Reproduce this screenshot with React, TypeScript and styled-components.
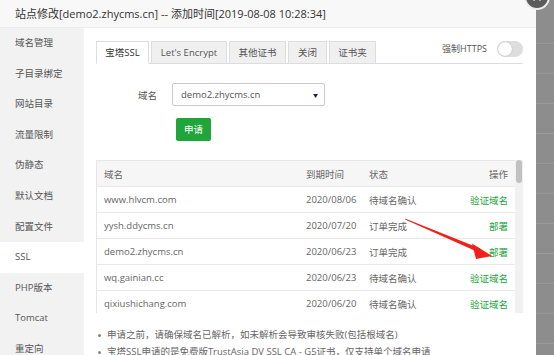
import React from 'react'
import styled, { createGlobalStyle } from 'styled-components'

const GREEN = '#20a53a'

const GlobalStyle = createGlobalStyle`
  html, body {
    margin: 0;
    padding: 0;
    background: #fff;
  }
  body {
    font-family: "Open Sans", "Noto Sans CJK SC", sans-serif;
    color: #555;
  }
`

const Page = styled.div`
  position: relative;
  display: flex;
  width: 554px;
  height: 355px;
  overflow: hidden;
`

const Dialog = styled.div`
  display: flex;
  flex-direction: column;
  width: 536px;
  background: #fff;
`

const Backdrop = styled.div`
  flex: 1;
  background: repeating-linear-gradient(
    180deg,
    #8d8d8d 0px,
    #8d8d8d 29px,
    #9a9a9a 29px,
    #9a9a9a 30px
  );
  background-position: 0 14px;
`

const CloseButton = styled.div`
  position: absolute;
  left: 524px;
  top: -16px;
  width: 22px;
  height: 22px;
  border-radius: 50%;
  background: #5c5c5c;
  border: 2px solid #eee;
  display: flex;
  align-items: center;
  justify-content: center;
`

const TitleBar = styled.div`
  height: 27px;
  line-height: 27px;
  padding-left: 15px;
  background: #f8f8f8;
  border-bottom: 1px solid #ececec;
  color: #333;
  font-size: 11px;
  white-space: nowrap;
`

const Body = styled.div`
  display: flex;
  flex: 1;
  min-height: 0;
`

const Sidebar = styled.div`
  width: 84px;
  background: #f2f2f2;
  display: flex;
  flex-direction: column;
`

const SideItem = styled.div<{ $active?: boolean }>`
  flex: 0 0 30.6px;
  line-height: 30.6px;
  padding-left: 15px;
  font-size: 9.5px;
  color: #555;
  background: ${p => (p.$active ? '#fff' : 'transparent')};
`

const Content = styled.div`
  flex: 1;
  padding: 12px 13px 0 12px;
  min-width: 0;
`

const TabBar = styled.div`
  display: flex;
  align-items: flex-end;
  height: 23px;
  border-bottom: 1px solid #dcdce6;
`

const Tab = styled.div<{ $active?: boolean; $w: number }>`
  box-sizing: border-box;
  width: ${p => p.$w}px;
  height: 23px;
  margin-right: 2px;
  margin-bottom: -1px;
  border: 1px solid #ddd;
  border-bottom-color: ${p => (p.$active ? '#fff' : '#ddd')};
  background: ${p => (p.$active ? '#fff' : '#f0f0f0')};
  color: ${p => (p.$active ? '#333' : '#555')};
  font-size: 9.5px;
  line-height: 22px;
  text-align: center;
`

const HttpsSwitch = styled.div`
  margin-left: auto;
  align-self: center;
  display: flex;
  align-items: center;
  gap: 10px;
  font-size: 9px;
  color: #555;
  margin-top: -6px;
`

const Toggle = styled.div`
  position: relative;
  width: 26px;
  height: 16px;
  border-radius: 8px;
  background: #ddd;
`

const Knob = styled.div`
  position: absolute;
  left: 1px;
  top: 1px;
  width: 14px;
  height: 14px;
  border-radius: 50%;
  background: #fff;
  box-shadow: 0 0 1px rgba(0, 0, 0, 0.35);
`

const FormRow = styled.div`
  display: flex;
  align-items: center;
  margin-top: 19px;
`

const Label = styled.div`
  width: 61px;
  padding-right: 15px;
  text-align: right;
  font-size: 9.5px;
  color: #555;
`

const Select = styled.div`
  box-sizing: border-box;
  display: flex;
  align-items: center;
  justify-content: space-between;
  width: 153px;
  height: 23px;
  padding: 0 6px 0 8px;
  border: 1px solid #ccc;
  border-radius: 2px;
  font-size: 9.5px;
  color: #555;
`

const Caret = styled.span`
  font-size: 5px;
  color: #222;
`

const ApplyButton = styled.div`
  width: 35px;
  height: 23px;
  margin: 12px 0 0 80px;
  border-radius: 2px;
  background: ${GREEN};
  color: #fff;
  font-size: 9.5px;
  line-height: 23px;
  text-align: center;
`

const TableBox = styled.div`
  display: flex;
  height: 153px;
  margin-top: 19px;
  overflow: hidden;
`

const Table = styled.div`
  flex: 1;
  border-left: 1px solid #e6e6e6;
  border-top: 1px solid #e6e6e6;
`

const TRow = styled.div<{ $head?: boolean }>`
  display: grid;
  grid-template-columns: 202px 63px 1fr auto;
  height: 26px;
  align-items: center;
  box-sizing: border-box;
  border-bottom: 1px solid #e9e9e9;
  background: ${p => (p.$head ? '#f6f6f6' : '#fff')};
  font-size: 9.5px;
  color: #666;
`

const Cell = styled.div<{ $right?: boolean }>`
  padding: 0 7px;
  white-space: nowrap;
  text-align: ${p => (p.$right ? 'right' : 'left')};
`

const Action = styled.span`
  color: ${GREEN};
`

const ScrollTrack = styled.div`
  width: 8px;
  background: #f1f1f1;
  display: flex;
  justify-content: center;
`

const ScrollThumb = styled.div`
  width: 6px;
  height: 23px;
  border-radius: 3px;
  background: #c1c1c1;
`

const Notes = styled.ul`
  margin: 13px 0 0;
  padding: 0 0 0 11px;
  font-size: 9.5px;
  color: #666;
  line-height: 17px;
  list-style: none;
`

const Note = styled.li`
  position: relative;
  white-space: nowrap;
  &::before {
    content: '';
    position: absolute;
    left: -9px;
    top: 7.5px;
    width: 3px;
    height: 3px;
    border-radius: 50%;
    background: #888;
  }
`

const ArrowLayer = styled.svg`
  position: absolute;
  left: 0;
  top: 0;
  pointer-events: none;
`

const menu = ['域名管理', '子目录绑定', '网站目录', '流量限制', '伪静态', '默认文档', '配置文件', 'SSL', 'PHP版本', 'Tomcat', '重定向']

const tabs: [string, number][] = [
  ['宝塔SSL', 53],
  ["Let's Encrypt", 76],
  ['其他证书', 57],
  ['关闭', 39],
  ['证书夹', 47],
]

const rows = [
  { domain: 'www.hlvcm.com', date: '2020/08/06', state: '待域名确认', action: '验证域名' },
  { domain: 'yysh.ddycms.cn', date: '2020/07/20', state: '订单完成', action: '部署' },
  { domain: 'demo2.zhycms.cn', date: '2020/06/23', state: '订单完成', action: '部署' },
  { domain: 'wq.gainian.cc', date: '2020/06/23', state: '待域名确认', action: '验证域名' },
  { domain: 'qixiushichang.com', date: '2020/06/20', state: '待域名确认', action: '验证域名' },
]

export default function App() {
  return (
    <Page>
      <GlobalStyle />
      <Dialog>
        <TitleBar>站点修改[demo2.zhycms.cn] -- 添加时间[2019-08-08 10:28:34]</TitleBar>
        <Body>
          <Sidebar>
            {menu.map(m => (
              <SideItem key={m} $active={m === 'SSL'}>{m}</SideItem>
            ))}
          </Sidebar>
          <Content>
            <TabBar>
              {tabs.map(([t, w], i) => (
                <Tab key={t} $w={w} $active={i === 0}>{t}</Tab>
              ))}
              <HttpsSwitch>
                强制HTTPS
                <Toggle><Knob /></Toggle>
              </HttpsSwitch>
            </TabBar>
            <FormRow>
              <Label>域名</Label>
              <Select>
                demo2.zhycms.cn
                <Caret>▼</Caret>
              </Select>
            </FormRow>
            <ApplyButton>申请</ApplyButton>
            <TableBox>
              <Table>
                <TRow $head>
                  <Cell>域名</Cell>
                  <Cell>到期时间</Cell>
                  <Cell>状态</Cell>
                  <Cell $right>操作</Cell>
                </TRow>
                {rows.map(r => (
                  <TRow key={r.domain}>
                    <Cell>{r.domain}</Cell>
                    <Cell>{r.date}</Cell>
                    <Cell>{r.state}</Cell>
                    <Cell $right><Action>{r.action}</Action></Cell>
                  </TRow>
                ))}
              </Table>
              <ScrollTrack><ScrollThumb /></ScrollTrack>
            </TableBox>
            <Notes>
              <Note>申请之前，请确保域名已解析，如未解析会导致审核失败(包括根域名)</Note>
              <Note>宝塔SSL申请的是免费版TrustAsia DV SSL CA - G5证书，仅支持单个域名申请</Note>
            </Notes>
          </Content>
        </Body>
      </Dialog>
      <Backdrop />
      <CloseButton>
        <svg width="10" height="10" viewBox="0 0 10 10">
          <path d="M2 2 L8 8 M8 2 L2 8" stroke="#fff" strokeWidth="1.6" strokeLinecap="round" />
        </svg>
      </CloseButton>
      <ArrowLayer width="554" height="355" viewBox="0 0 554 355">
        <polygon points="405,218.6 405.6,219.8 478.5,252.2 480.2,248.6" fill="#f0201a" />
        <polygon points="472,243.5 492,256 476,259" fill="#f0201a" />
      </ArrowLayer>
    </Page>
  )
}
